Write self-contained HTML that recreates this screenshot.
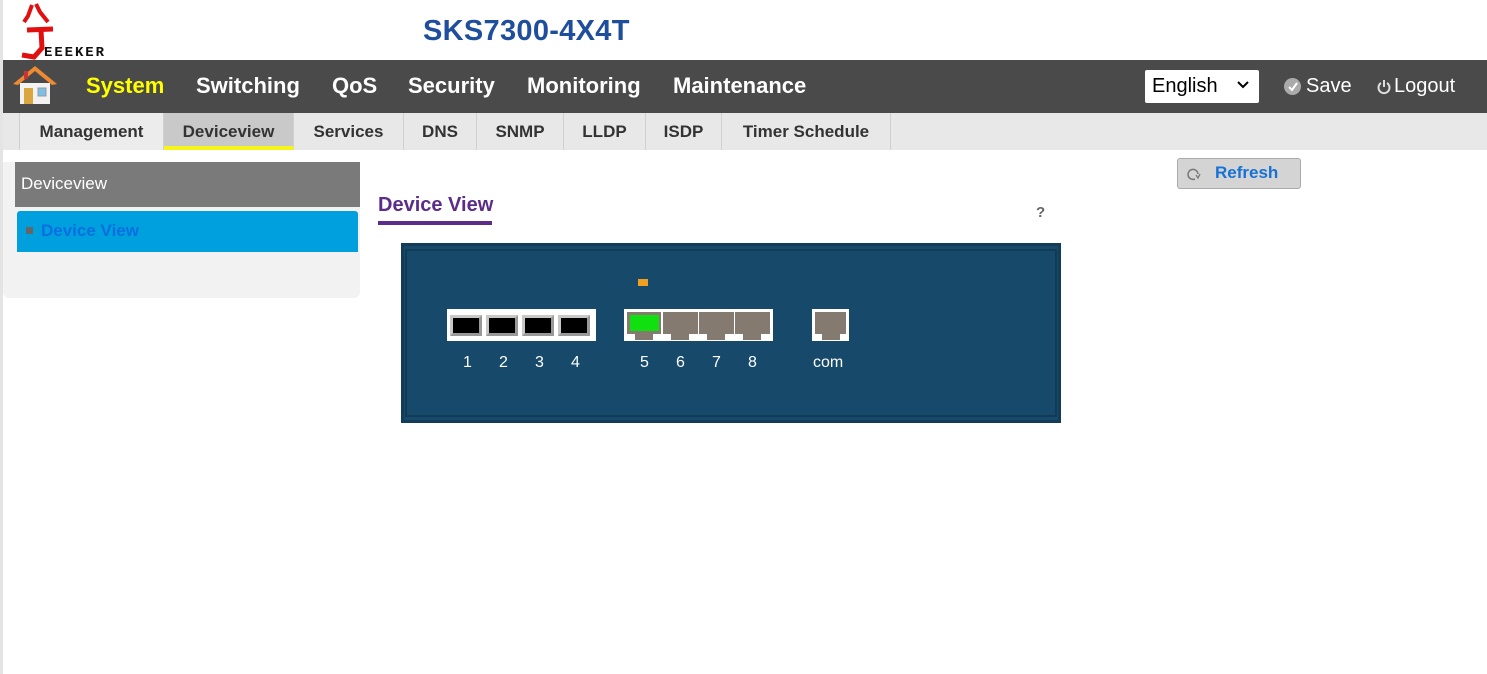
<!DOCTYPE html>
<html><head><meta charset="utf-8"><style>
*{margin:0;padding:0;box-sizing:border-box}
body{width:1487px;height:674px;background:#fff;font-family:"Liberation Sans",Arial,sans-serif;position:relative;overflow:hidden}
.a{position:absolute}
.nav span{position:absolute;top:73px;font-size:22px;font-weight:bold;color:#fff}
.tab{position:absolute;top:113px;height:37px;border-right:1px solid #d0d0d0;font-size:17px;font-weight:bold;color:#333;text-align:center;line-height:37px}
.num{position:absolute;top:354px;color:#fff;font-size:15px}
.bp{position:absolute;top:315px;width:32px;height:21px;background:#000;border:3px solid #c8c8c8;border-right-color:#999;border-bottom-color:#999}
.gp{position:absolute;top:312px;width:34px;height:22px;background:#857a70}
.gt{position:absolute;top:334px;width:18px;height:6px;background:#857a70}
</style></head><body>
<div class="a" style="left:0;top:0;width:3px;height:674px;background:#e4e4e4"></div>
<!-- logo -->
<svg class="a" style="left:18px;top:2px" width="90" height="58" viewBox="0 0 90 58">
<path d="M14 3 L10 14 L6 20 M18 2 L22 10 L30 20" stroke="#e01010" stroke-width="4" fill="none"/>
<path d="M9 28 L35 27 M23 28 L24 46 L16 55 L4 53" stroke="#e01010" stroke-width="5" fill="none"/>
<text x="26" y="54" font-family="Liberation Mono,monospace" font-size="14" font-weight="bold" fill="#111" textLength="60">EEEKER</text>
</svg>
<div class="a" style="left:423px;top:15px;font-size:29px;font-weight:bold;color:#1f4e9c;letter-spacing:0.3px">SKS7300-4X4T</div>
<!-- nav -->
<div class="a" style="left:3px;top:60px;width:1484px;height:53px;background:#4a4a4a"></div>
<svg class="a" style="left:10px;top:64px" width="50" height="42" viewBox="0 0 50 42">
<path d="M3 20 L25 2 L47 20 L42 21 L25 7 L8 21Z" fill="#f08a30"/>
<rect x="10" y="19" width="30" height="21" fill="#f2f2f2"/>
<rect x="14" y="24" width="9" height="16" fill="#d9a640"/>
<rect x="28" y="24" width="8" height="8" fill="#7cc0e8" stroke="#999"/>
<rect x="14" y="7" width="4" height="8" fill="#c33"/>
</svg>
<div class="nav">
<span style="left:86px;color:#ffff00">System</span>
<span style="left:196px">Switching</span>
<span style="left:332px">QoS</span>
<span style="left:408px">Security</span>
<span style="left:527px">Monitoring</span>
<span style="left:673px">Maintenance</span>
</div>
<div class="a" style="left:1145px;top:70px;width:114px;height:33px;background:#fff;border-radius:2px;font-size:20px;line-height:33px;padding-left:7px;color:#000">English</div>
<svg class="a" style="left:1237px;top:81px" width="12" height="8"><path d="M1 1 L6 6 L11 1" stroke="#000" stroke-width="2" fill="none"/></svg>
<div class="a" style="left:1284px;top:78px;width:17px;height:17px;border-radius:50%;background:#aaa"></div>
<svg class="a" style="left:1284px;top:78px" width="17" height="17"><path d="M5 9 L8 12 L13 5" stroke="#fff" stroke-width="2" fill="none"/></svg>
<div class="a" style="left:1306px;top:75px;font-size:20px;color:#fff">Save</div>
<svg class="a" style="left:1377px;top:79px" width="14" height="16"><path d="M4 4 A5.5 5.5 0 1 0 10 4" stroke="#ddd" stroke-width="2" fill="none"/><path d="M7 1 V8" stroke="#ddd" stroke-width="2"/></svg>
<div class="a" style="left:1394px;top:75px;font-size:20px;color:#fff">Logout</div>
<!-- subnav -->
<div class="a" style="left:3px;top:113px;width:1484px;height:37px;background:#e8e8e8"></div>
<div class="a" style="left:19px;top:113px;width:1px;height:37px;background:#d0d0d0"></div>
<div class="tab" style="left:20px;width:144px;background:#ececec">Management</div>
<div class="tab" style="left:164px;width:130px;background:#c9c9c9;border-bottom:4px solid #f5f51a;line-height:37px">Deviceview</div>
<div class="tab" style="left:294px;width:110px">Services</div>
<div class="tab" style="left:404px;width:73px">DNS</div>
<div class="tab" style="left:477px;width:87px">SNMP</div>
<div class="tab" style="left:564px;width:82px">LLDP</div>
<div class="tab" style="left:646px;width:76px">ISDP</div>
<div class="tab" style="left:722px;width:169px">Timer Schedule</div>
<!-- left panel -->
<div class="a" style="left:3px;top:162px;width:357px;height:136px;background:#f2f2f2;border-radius:0 0 6px 6px"></div>
<div class="a" style="left:15px;top:162px;width:345px;height:45px;background:#7a7a7a;color:#fff;font-size:17px;line-height:43px;padding-left:6px">Deviceview</div>
<div class="a" style="left:17px;top:211px;width:341px;height:41px;background:#009fdd;border-radius:3px 3px 0 0"></div>
<div class="a" style="left:26px;top:227px;width:7px;height:7px;background:#666"></div>
<div class="a" style="left:41px;top:221px;font-size:17px;font-weight:bold;color:#0a6fe0">Device View</div>
<!-- content -->
<div class="a" style="left:378px;top:194px;font-size:20px;font-weight:bold;color:#5b2c8a">Device View</div>
<div class="a" style="left:378px;top:221px;width:114px;height:4px;background:#5b2c8a"></div>
<div class="a" style="left:1036px;top:204px;font-size:15px;font-weight:bold;color:#666">?</div>
<div class="a" style="left:1177px;top:158px;width:124px;height:31px;background:#d4d4d4;border:1px solid #aaa;border-radius:3px"></div>
<svg class="a" style="left:1187px;top:168px" width="14" height="14"><path d="M11 6 A5 5 0 1 0 8 11" stroke="#777" stroke-width="1.5" fill="none"/><path d="M9 7 L11 10 L13 6" stroke="#777" stroke-width="1.3" fill="none"/></svg>
<div class="a" style="left:1215px;top:163px;font-size:17px;font-weight:bold;color:#1673d5">Refresh</div>
<!-- device -->
<div class="a" style="left:401px;top:243px;width:660px;height:180px;background:#17496a;border:3px solid #123c58"></div>
<div class="a" style="left:405px;top:249px;width:652px;height:168px;border:2px solid #113a55"></div>
<div class="a" style="left:638px;top:279px;width:10px;height:7px;background:#f0a020"></div>
<div class="a" style="left:447px;top:309px;width:149px;height:32px;background:#fff"></div>
<div class="bp" style="left:450px"></div><div class="bp" style="left:486px"></div><div class="bp" style="left:522px"></div><div class="bp" style="left:558px"></div>
<div class="a" style="left:624px;top:309px;width:149px;height:32px;background:#fff"></div>
<div class="gp" style="left:627px"></div><div class="gp" style="left:663px;width:35px"></div><div class="gp" style="left:699px;width:35px"></div><div class="gp" style="left:735px;width:35px"></div>
<div class="a" style="left:630px;top:315px;width:29px;height:16px;background:#10e010"></div>
<div class="gt" style="left:635px"></div><div class="gt" style="left:671px"></div><div class="gt" style="left:707px"></div><div class="gt" style="left:743px"></div>
<div class="a" style="left:812px;top:309px;width:37px;height:32px;background:#fff"></div>
<div class="gp" style="left:815px;width:31px"></div><div class="gt" style="left:822px"></div>
<div class="num" style="left:463px;font-size:16px">1</div><div class="num" style="left:499px;font-size:16px">2</div><div class="num" style="left:535px;font-size:16px">3</div><div class="num" style="left:571px;font-size:16px">4</div>
<div class="num" style="left:640px;font-size:16px">5</div><div class="num" style="left:676px;font-size:16px">6</div><div class="num" style="left:712px;font-size:16px">7</div><div class="num" style="left:748px;font-size:16px">8</div>
<div class="num" style="left:813px;font-size:16px">com</div>
</body></html>
